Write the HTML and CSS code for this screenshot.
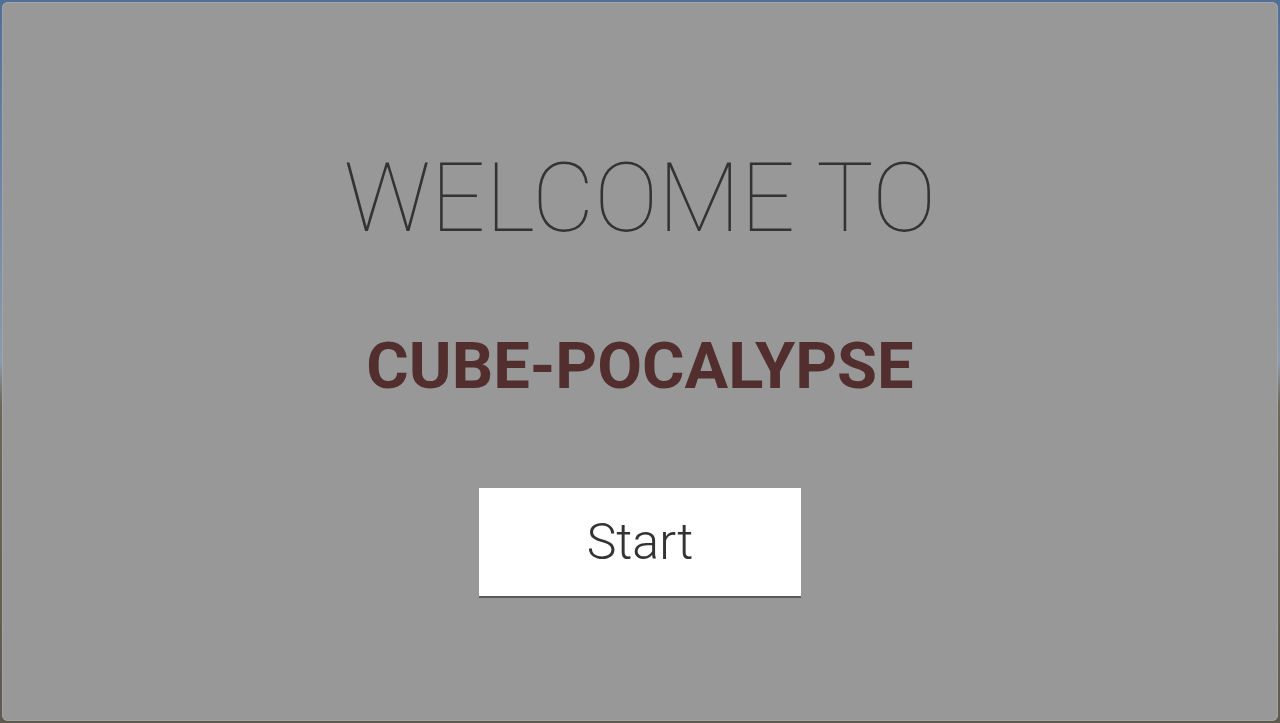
FILE: index.html
```html
<!DOCTYPE html>
<html>
<head>
<meta charset="utf-8">
<link rel="stylesheet" href="styles.css">
</head>
<body>
<div class="panel">
  <h1 class="welcome">WELCOME TO</h1>
  <h2 class="title">CUBE-POCALYPSE</h2>
  <button class="start">Start</button>
</div>
</body>
</html>
```
FILE: styles.css
```css
html, body {
  margin: 0;
  height: 100%;
}
body {
  background: linear-gradient(to bottom, #4f6f99 0%, #8a9bb0 50%, #6e6656 56%, #5e5a50 100%);
  padding: 2px;
  box-sizing: border-box;
  font-family: Roboto, "Liberation Sans", sans-serif;
}
.panel {
  height: 100%;
  box-sizing: border-box;
  background: #989898;
  border-radius: 6px;
  box-shadow: inset 0 0 0 1px #a4a4a4;
  display: flex;
  flex-direction: column;
  align-items: center;
  padding-top: 148px;
}
.welcome {
  margin: 0;
  font-size: 96px;
  font-weight: 100;
  line-height: 1;
  color: #333;
}
.title {
  margin: 88px 0 0;
  font-size: 65px;
  font-weight: 700;
  line-height: 1;
  color: #532e2e;
}
.start {
  margin-top: 89px;
  width: 322px;
  height: 108px;
  border: none;
  background: #fff;
  box-shadow: 0 2px 0 #5a5a5a;
  font-family: Roboto, "Liberation Sans", sans-serif;
  font-size: 50px;
  font-weight: 300;
  color: #333;
  padding: 0;
}
```
